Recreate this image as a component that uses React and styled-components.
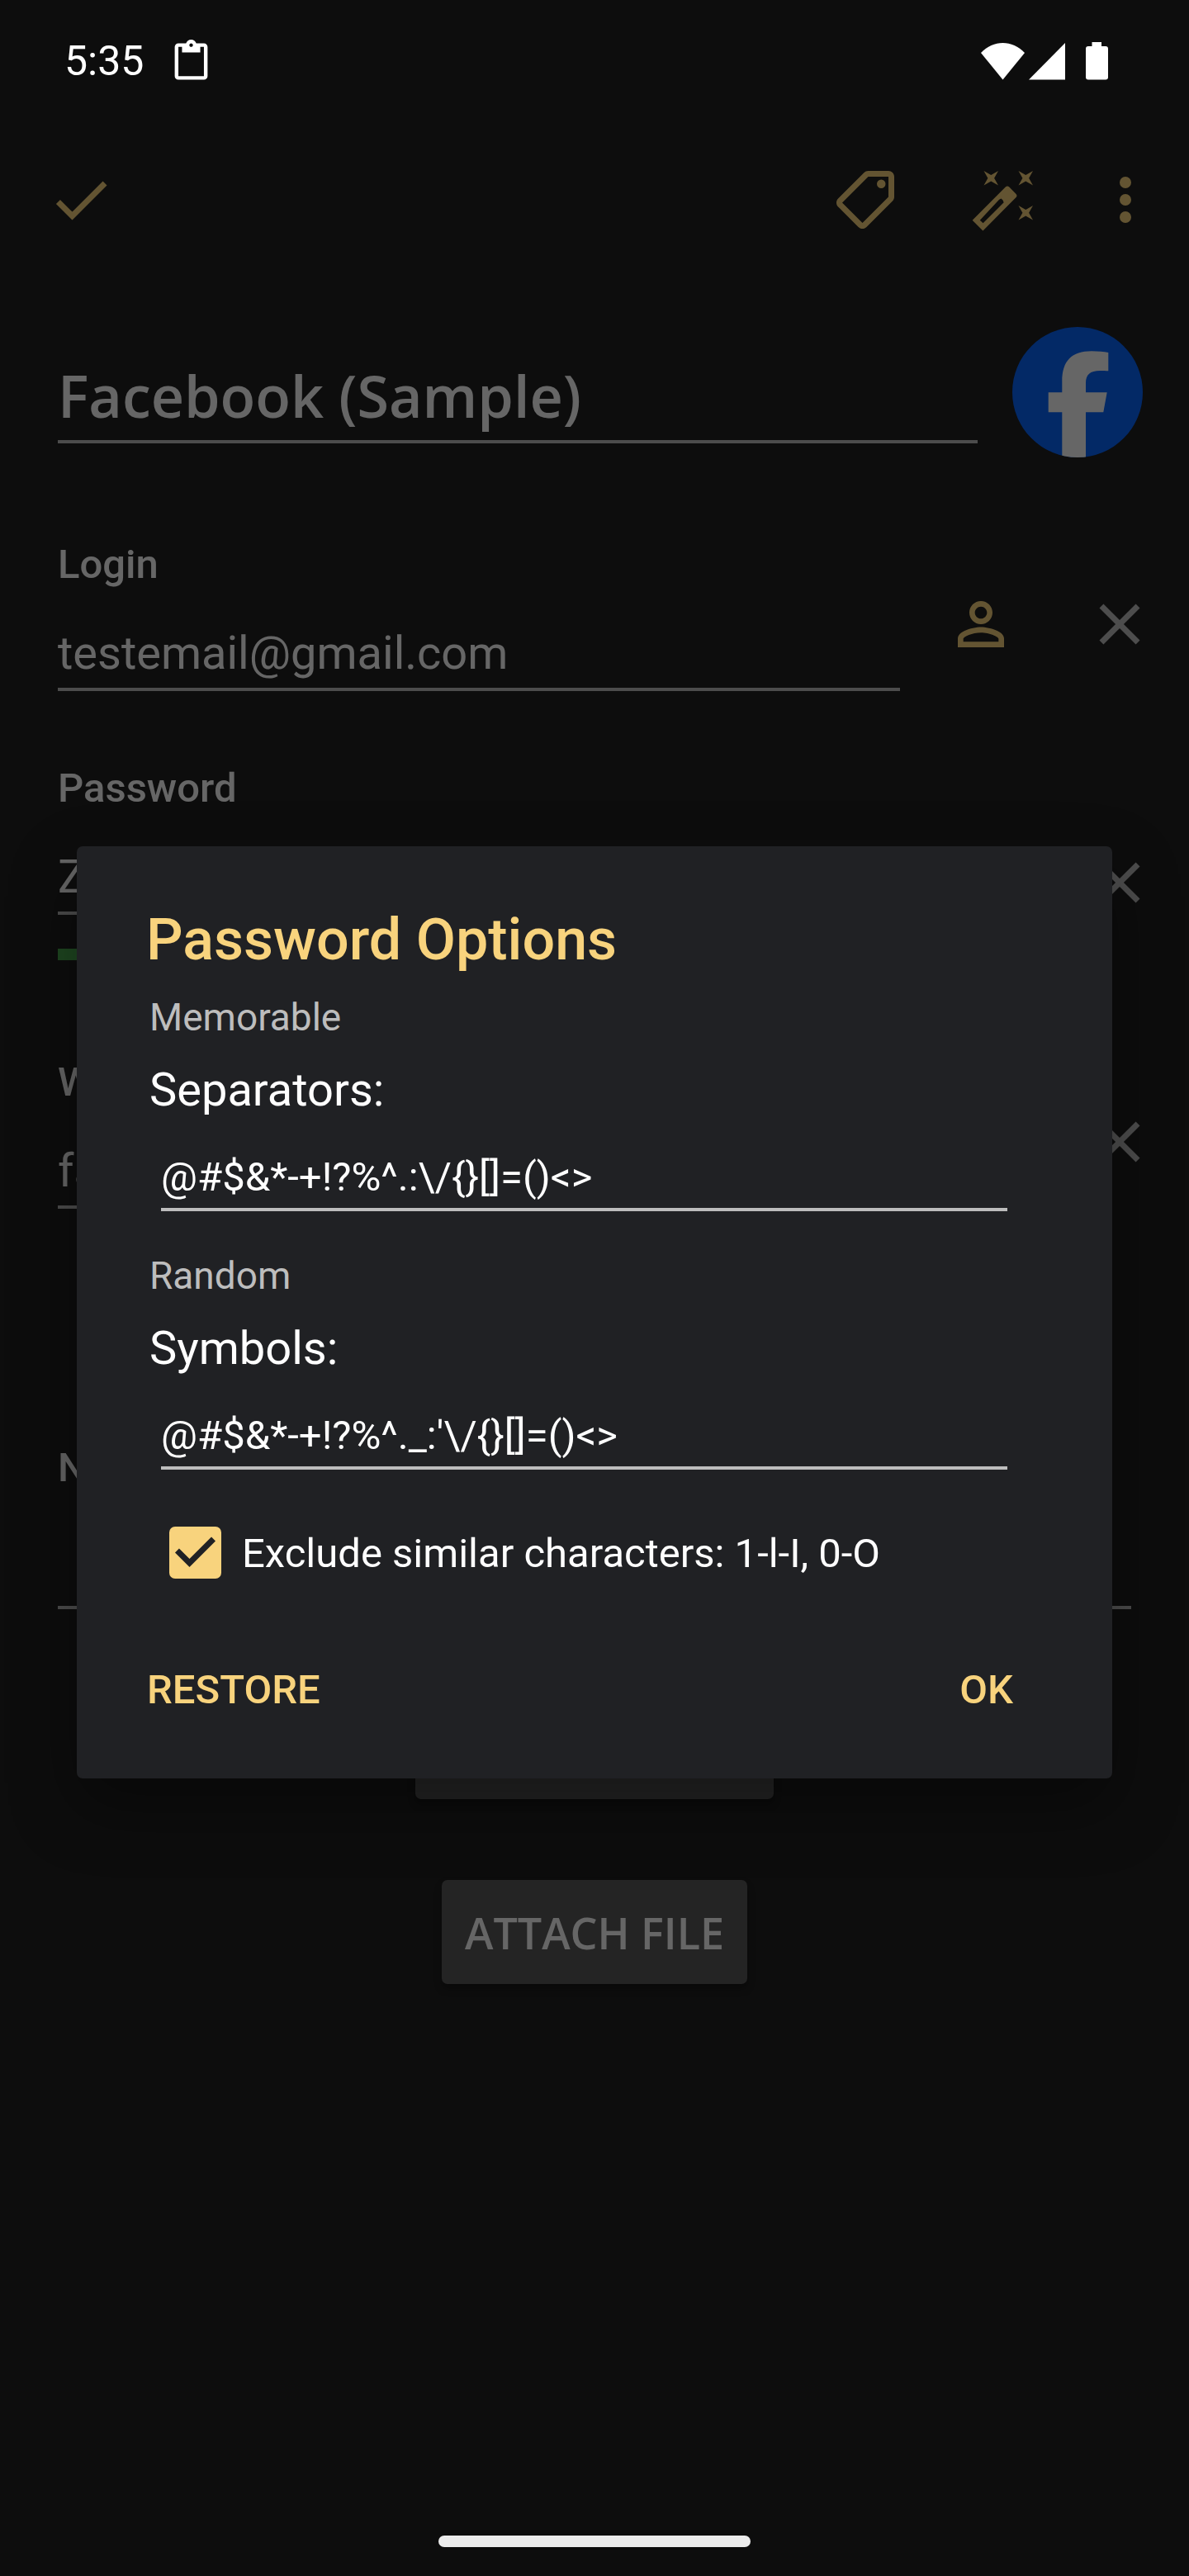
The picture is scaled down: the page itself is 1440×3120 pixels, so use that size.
import React, { useState } from "react";
import styled, { createGlobalStyle } from "styled-components";

function App() {
  const [separators, setSeparators] = useState("@#$&*-+!?%^.:\\/{}[]=()<>");
  const [symbols, setSymbols] = useState("@#$&*-+!?%^._:'\\/{}[]=()<>");
  const [exclude, setExclude] = useState(true);

  return (
    <Screen>
      <GlobalStyle />
      <StatusBar>
        <Clock>5:35</Clock>
        <svg width="53" height="53" viewBox="0 0 24 24" fill="currentColor">
          <path d="M19 2h-4.18C14.4.84 13.3 0 12 0c-1.3 0-2.4.84-2.82 2H5c-1.1 0-2 .9-2 2v16c0 1.1.9 2 2 2h14c1.1 0 2-.9 2-2V4c0-1.1-.9-2-2-2zm-7 0c.55 0 1 .45 1 1s-.45 1-1 1-1-.45-1-1 .45-1 1-1zm7 18H5V4h2v3h10V4h2v16z" />
        </svg>
        <StatusIcons>
          <svg width="53" height="45" viewBox="0 0 53 45" fill="currentColor">
            <path d="M0 12C15-4 38-4 53 12L26.5 44.5z" />
          </svg>
          <svg width="44" height="45" viewBox="0 0 44 45" fill="currentColor">
            <path d="M44 0v44.500H0z" />
          </svg>
          <Battery width="27" height="46" viewBox="0 0 27 46" fill="currentColor">
            <path d="M7.500 0h11.500v5H24a3 3 0 0 1 3 3v34.600a3 3 0 0 1-3 3H3a3 3 0 0 1-3-3V8a3 3 0 0 1 3-3h4.500z" />
          </Battery>
        </StatusIcons>
      </StatusBar>

      <Toolbar>
        <IconButton aria-label="Save">
          <Icon d="M9 16.17L4.83 12l-1.42 1.41L9 19 21 7l-1.41-1.41z" />
        </IconButton>
        <ToolbarActions>
          <IconButton aria-label="Labels">
            <Icon d="M2.59 11.58l9-9C11.95 2.22 12.45 2 13 2h7c1.1 0 2 .9 2 2v7c0 .55-.22 1.05-.59 1.42l-9 9c-.36.36-.86.58-1.41.58s-1.05-.22-1.410-.59l-7-7C2.220 14.05 2 13.550 2 13s.23-1.060.59-1.420zM11 20.010L20 11V4h-7v-.010l-9 9 7 7.020zM17.500 5a1.500 1.500 0 1 0 0 3 1.500 1.500 0 0 0 0-3z" />
          </IconButton>
          <IconButton aria-label="Generate">
            <Icon d="M7.500 5.600L5 7l1.400-2.500L5 2l2.500 1.400L10 2 8.600 4.500 10 7zM19.500 15.400L22 14l-1.400 2.500L22 19l-2.500-1.400L17 19l1.400-2.500L17 14zM22 2l-1.400 2.500L22 7l-2.500-1.400L17 7l1.400-2.500L17 2l2.500 1.400zM1.050 19.050L12.500 7.600q.65-.65 1.300 0l2.300 2.300q.65.65 0 1.300L4.700 22.700zM3.650 19.050l1.100 1.050 7.150-7.150-.3-.8-.6-.6-.7.4z" />
          </IconButton>
          <IconButton aria-label="More">
            <Icon d="M12 8a2 2 0 1 0 0-4 2 2 0 0 0 0 4zm0 2a2 2 0 1 0 0 4 2 2 0 0 0 0-4zm0 6a2 2 0 1 0 0 4 2 2 0 0 0 0-4z" />
          </IconButton>
        </ToolbarActions>
      </Toolbar>

      <Form>
        <TitleRow>
          <TitleInput aria-label="Title" defaultValue="Facebook (Sample)" />
          <Logo viewBox="0 0 158 158">
            <clipPath id="round">
              <circle cx="79" cy="79" r="79" />
            </clipPath>
            <g clipPath="url(#round)">
              <rect width="158" height="158" fill="#0866ff" />
              <path
                fill="#fff"
                d="M60.300 158v-54.700H43.700v-24h16.600V66C60.300 41 72 29.300 96 29.300c8 0 15 .7 20.300 1.800v22.200c-3-.2-6-.3-10-.3C94 53 89 58 89 68v11.300h25.700l-4.400 24H89V158z"
              />
            </g>
          </Logo>
        </TitleRow>

        <Field $space={101}>
          <Label htmlFor="login">Login</Label>
          <FieldRow>
            <FieldInput id="login" defaultValue="testemail@gmail.com" />
            <FieldActions>
              <IconButton aria-label="Usernames">
                <Icon d="M12 5.900c1.160 0 2.100.94 2.100 2.100s-.94 2.100-2.100 2.100S9.900 9.160 9.900 8s.94-2.100 2.100-2.100m0 9c2.970 0 6.100 1.460 6.100 2.100v1.100H5.900V17c0-.64 3.130-2.100 6.100-2.100M12 4C9.790 4 8 5.790 8 8s1.790 4 4 4 4-1.790 4-4-1.790-4-4-4zm0 9c-2.670 0-8 1.340-8 4v3h16v-3c0-2.660-5.330-4-8-4z" />
              </IconButton>
              <RemoveButton />
            </FieldActions>
          </FieldRow>
        </Field>

        <Field $space={89}>
          <Label htmlFor="password">Password</Label>
          <FieldRow>
            <PasswordColumn>
              <FieldInput id="password" defaultValue="Z" />
              <Strength />
            </PasswordColumn>
            <FieldActions $drop={43}>
              <RemoveButton />
            </FieldActions>
          </FieldRow>
        </Field>

        <Field $space={119}>
          <Label htmlFor="website">Website</Label>
          <FieldRow>
            <FieldInput id="website" defaultValue="facebook.com" />
            <FieldActions>
              <RemoveButton />
            </FieldActions>
          </FieldRow>
        </Field>

        <Field $space={285}>
          <Label htmlFor="notes">Notes</Label>
          <Notes id="notes" />
        </Field>

        <FormButtons>
          <FormButton>Attach Image</FormButton>
          <FormButton>Attach File</FormButton>
        </FormButtons>
      </Form>

      <Scrim>
        <Dialog role="dialog" aria-labelledby="dialog-title">
          <DialogTitle id="dialog-title">Password Options</DialogTitle>
          <DialogBody>
            <Section>
              <Category>Memorable</Category>
              <OptionLabel htmlFor="separators">Separators:</OptionLabel>
              <OptionInput
                id="separators"
                value={separators}
                onChange={(e) => setSeparators(e.target.value)}
              />
            </Section>
            <Section>
              <Category>Random</Category>
              <OptionLabel htmlFor="symbols">Symbols:</OptionLabel>
              <OptionInput
                id="symbols"
                value={symbols}
                onChange={(e) => setSymbols(e.target.value)}
              />
            </Section>
            <CheckRow>
              <CheckBox>
                <input
                  type="checkbox"
                  checked={exclude}
                  onChange={(e) => setExclude(e.target.checked)}
                />
                {exclude && (
                  <svg viewBox="3 3 18 18" fill="#202124">
                    <path d="M10 17l-5-5 1.410-1.410L10 14.170l7.590-7.590L19 8z" />
                  </svg>
                )}
              </CheckBox>
              Exclude similar characters: 1-l-I, 0-O
            </CheckRow>
          </DialogBody>
          <DialogActions>
            <TextButton>Restore</TextButton>
            <TextButton>OK</TextButton>
          </DialogActions>
        </Dialog>
      </Scrim>

      <NavBar>
        <HomeHandle />
      </NavBar>
    </Screen>
  );
}

function Icon({ d }) {
  return (
    <svg width="84" height="84" viewBox="0 0 24 24" fill="currentColor" fillRule="evenodd">
      <path d={d} />
    </svg>
  );
}

function RemoveButton() {
  return (
    <IconButton $muted aria-label="Remove">
      <Icon d="M19 6.410L17.590 5 12 10.590 6.410 5 5 6.410 10.590 12 5 17.590 6.410 19 12 13.410 17.590 19 19 17.590 13.410 12z" />
    </IconButton>
  );
}

export default App;

const GlobalStyle = createGlobalStyle`
  * {
    box-sizing: border-box;
  }
  body {
    margin: 0;
    background: #212121;
    font-family: Roboto, sans-serif;
  }
  button, input, textarea {
    margin: 0;
    padding: 0;
    border: 0;
    border-radius: 0;
    outline: none;
    background: none;
    color: inherit;
    font-family: inherit;
  }
  button {
    cursor: pointer;
  }
  svg {
    display: block;
    flex-shrink: 0;
  }
`;

const Screen = styled.div`
  position: relative;
  display: flex;
  flex-direction: column;
  min-height: 100vh;
  background: #212121;
  color: #fff;
`;

/* System bars stay bright above the scrim */
const StatusBar = styled.header`
  position: relative;
  z-index: 2;
  display: flex;
  align-items: center;
  height: 144px;
  padding: 4px 98px 0 78px;
`;

const Clock = styled.span`
  margin-right: 31px;
  font-size: 50px;
  line-height: 58px;
`;

const StatusIcons = styled.div`
  display: flex;
  align-items: flex-end;
  gap: 5px;
  margin-left: auto;
`;

const Battery = styled.svg`
  margin-left: 20px;
`;

const Toolbar = styled.nav`
  display: flex;
  align-items: center;
  justify-content: space-between;
  height: 196px;
  padding: 0 35px 0 56px;
`;

const ToolbarActions = styled.div`
  display: flex;
  gap: 84px;

  button:last-child {
    margin-left: -21px;
  }
`;

const IconButton = styled.button`
  color: ${(props) => (props.$muted ? "#c0c0c0" : "#f8d37d")};
`;

const Form = styled.main`
  padding: 56px 0 0 70px;
`;

const TitleRow = styled.div`
  display: flex;
  align-items: flex-start;
  gap: 42px;
  padding-right: 56px;
`;

const TitleInput = styled.input`
  flex: 1;
  min-width: 0;
  padding: 35px 0 6px;
  border-bottom: 4px solid #bdbdbd;
  font-family: "Open Sans", sans-serif;
  font-size: 70px;
  font-weight: 600;
  line-height: 96px;
  height: 141px;
`;

const Logo = styled.svg`
  width: 158px;
  height: 158px;
`;

const Field = styled.div`
  margin-top: ${(props) => props.$space}px;
`;

const Label = styled.label`
  display: block;
  font-size: 49px;
  font-weight: 500;
  line-height: 58px;
`;

const FieldRow = styled.div`
  display: flex;
  align-items: flex-start;
  gap: 56px;
  padding-right: 42px;
`;

const FieldInput = styled.input`
  flex: 1;
  min-width: 0;
  height: 124px;
  padding: 45px 0 9px;
  border-bottom: 4px solid #bdbdbd;
  font-size: 56px;
  line-height: 66px;
`;

const FieldActions = styled.div`
  display: flex;
  gap: 84px;
  padding-top: ${(props) => props.$drop || 1}px;
`;

const PasswordColumn = styled.div`
  display: flex;
  flex: 1;
  flex-direction: column;

  input {
    flex: none;
  }
`;

const Strength = styled.div`
  height: 14px;
  margin-top: 41px;
  background: #4caf50;
`;

const Notes = styled.textarea`
  display: block;
  width: calc(100% - 70px);
  height: 142px;
  border-bottom: 4px solid #bdbdbd;
  font-size: 56px;
  resize: none;
`;

const FormButtons = styled.div`
  display: flex;
  flex-direction: column;
  align-items: center;
  gap: 98px;
  padding: 104px 70px 0 0;
`;

const FormButton = styled.button`
  height: 126px;
  padding: 0 28px;
  border-radius: 7px;
  background: #5a5a5a;
  box-shadow: 0 6px 10px rgba(0, 0, 0, 0.3);
  font-family: "Open Sans", sans-serif;
  font-size: 52px;
  font-weight: 600;
  text-transform: uppercase;
`;

const Scrim = styled.div`
  position: absolute;
  inset: 0;
  z-index: 1;
  display: flex;
  align-items: center;
  padding: 143px 93px 84px;
  background: rgba(0, 0, 0, 0.6);
`;

const Dialog = styled.section`
  flex: 1;
  padding: 72px 0 44px;
  border-radius: 7px;
  background: #202124;
  box-shadow: 0 33px 80px rgba(0, 0, 0, 0.38);
`;

const DialogTitle = styled.h2`
  margin: 0 0 26px;
  padding: 0 84px;
  color: #f8d37d;
  font-size: 70px;
  font-weight: 500;
  line-height: 82px;
`;

const DialogBody = styled.div`
  padding: 0 127px 0 88px;
`;

const Section = styled.div`
  display: flex;
  flex-direction: column;

  & + & {
    margin-top: 51px;
  }
`;

const Category = styled.span`
  color: #bdbdbd;
  font-size: 46px;
  line-height: 54px;
`;

const OptionLabel = styled.label`
  margin-top: 28px;
  font-size: 56px;
  line-height: 66px;
`;

const OptionInput = styled.input`
  height: 114px;
  margin-left: 14px;
  padding: 43px 0 9px;
  border-bottom: 4px solid #bdbdbd;
  font-size: 49px;
  line-height: 58px;
`;

const CheckRow = styled.label`
  display: flex;
  align-items: flex-start;
  gap: 25px;
  margin: 69px 0 0 24px;
  font-size: 49px;
  line-height: 66px;
`;

const CheckBox = styled.span`
  position: relative;
  flex: none;
  width: 63px;
  height: 63px;

  input {
    display: block;
    width: 100%;
    height: 100%;
    appearance: none;
    border: 7px solid #bdbdbd;
    border-radius: 7px;
  }
  input:checked {
    border-color: #f8d37d;
    background: #f8d37d;
  }
  svg {
    position: absolute;
    inset: 0;
    pointer-events: none;
  }
`;

const DialogActions = styled.div`
  display: flex;
  justify-content: space-between;
  margin-top: 69px;
  padding: 0 92px 0 57px;
`;

const TextButton = styled.button`
  height: 126px;
  padding: 0 28px;
  color: #f8d37d;
  font-size: 49px;
  font-weight: 500;
  line-height: 58px;
  text-transform: uppercase;
`;

const NavBar = styled.footer`
  position: relative;
  z-index: 2;
  display: flex;
  justify-content: center;
  margin-top: auto;
  padding-bottom: 35px;
`;

const HomeHandle = styled.div`
  width: 378px;
  height: 14px;
  border-radius: 7px;
  background: #ececec;
`;
